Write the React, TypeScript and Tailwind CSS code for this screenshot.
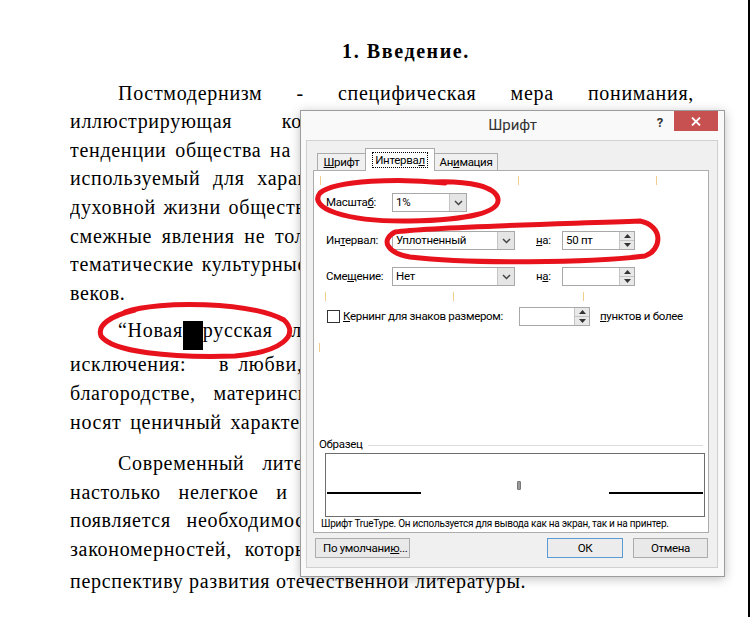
import React from 'react';

type DocLine = { text: React.ReactNode; cls?: string };

const U = ({ children }: { children: React.ReactNode }) => <span className="underline">{children}</span>;

const p1: DocLine[] = [
  { text: 'Постмодернизм - специфическая мера понимания,', cls: 'pl-[48px] text-justify [text-align-last:justify]' },
  { text: 'иллюстрирующая конкретные исторические реалии', cls: '[word-spacing:44px]' },
  { text: 'тенденции общества на современном этапе, термин,', cls: '[word-spacing:3px]' },
  { text: 'используемый для характеристики различных сфер', cls: '[word-spacing:7px]' },
  { text: 'духовной жизни общества, а также обозначающий', cls: '[word-spacing:2px]' },
  { text: 'смежные явления не только в литературе, но и все', cls: '[word-spacing:4px]' },
  { text: 'тематические культурные тенденции конца XX – начала XXI', cls: '[word-spacing:2px]' },
  { text: 'веков.' },
];

const p2: DocLine[] = [
  {
    text: (
      <>
        <span className="inline-block w-[149px]">исключения:</span>в
        <span className="inline-block w-[9px]" />
        любви, дружбе, героизме, честности,
      </>
    ),
    cls: '[word-spacing:13px]',
  },
  { text: 'благородстве, материнском чувстве все произведения', cls: '[word-spacing:12px]' },
  { text: 'носят ценичный характер и насмешливый тон.', cls: '[word-spacing:3px]' },
];

const p3: DocLine[] = [
  { text: 'Современный литературный процесс представляет собой', cls: 'pl-[48px] [word-spacing:12px]' },
  { text: 'настолько нелегкое и неоднозначное явление, что', cls: '[word-spacing:12px]' },
  { text: 'появляется необходимость в определении основных', cls: '[word-spacing:10px]' },
  { text: 'закономерностей, которые позволят представить', cls: '[word-spacing:7px]' },
  { text: 'перспективу развития отечественной литературы.', cls: 'mt-[3px]' },
];

const Line = ({ line }: { line: DocLine }) => (
  <div className={`leading-[28.6px] whitespace-nowrap overflow-hidden ${line.cls ?? ''}`}>{line.text}</div>
);

const Chevron = () => (
  <svg width="9" height="6" viewBox="0 0 9 6">
    <path d="M1 1l3.5 3.5L8 1" fill="none" stroke="#444" strokeWidth="1.5" />
  </svg>
);

const Select = ({ value, w }: { value: string; w: string }) => (
  <div className={`${w} h-[19px] flex border border-[#a8a8a8] bg-white`}>
    <span className="flex-1 pl-[3px] leading-[17px]">{value}</span>
    <span className="w-[17px] flex items-center justify-center bg-[#e5e5e5] border-l border-[#c4c4c4]">
      <Chevron />
    </span>
  </div>
);

const Spin = ({ value, w }: { value: string; w: string }) => (
  <div className={`${w} h-[19px] flex border border-[#a8a8a8] bg-white`}>
    <span className="flex-1 pl-[3px] leading-[17px]">{value}</span>
    <span className="w-[15px] flex flex-col bg-[#e8e8e8] border-l border-[#c4c4c4]">
      <span className="flex-1 flex items-center justify-center border-b border-[#c4c4c4]">
        <svg width="7" height="4" viewBox="0 0 7 4"><path d="M0 4h7L3.5 0z" fill="#333" /></svg>
      </span>
      <span className="flex-1 flex items-center justify-center">
        <svg width="7" height="4" viewBox="0 0 7 4"><path d="M0 0h7L3.5 4z" fill="#333" /></svg>
      </span>
    </span>
  </div>
);

const Tick = ({ cls }: { cls: string }) => <span className={`absolute w-px h-[9px] bg-[#f0cf8c] ${cls}`} />;

const FontDialog = () => (
  <div className="absolute left-[300px] top-[110px] w-[425px] h-[467px] border border-[#9c9c9c] bg-[#f9f9f9] shadow-[0_2px_10px_rgba(0,0,0,0.25)] flex flex-col font-['Roboto','Noto_Sans',sans-serif] text-[11.5px] tracking-[-0.3px] text-black whitespace-nowrap">
    {/* title bar */}
    <div className="h-[29px] shrink-0 flex">
      <div className="w-[69px]" />
      <div className="flex-1 text-center text-[15px] tracking-normal text-[#333] leading-[29px]">Шрифт</div>
      <div className="w-[69px] flex items-start justify-end pr-[6px]">
        <span className="mt-[4px] mr-[11px] text-[13px] font-bold text-[#333] leading-[16px]">?</span>
        <button className="w-[44px] h-[20px] bg-[#c75050] flex items-center justify-center">
          <svg width="10" height="9" viewBox="0 0 10 9">
            <path d="M1 0.5l8 8M9 0.5l-8 8" stroke="#fff" strokeWidth="1.8" />
          </svg>
        </button>
      </div>
    </div>

    {/* client area */}
    <div className="ml-[5px] mr-[6px] mb-[8px] flex-1 bg-[#f0f0f0] border border-[#d0d0d0] flex flex-col">
      <div className="flex items-end h-[22px] pl-[10px] mt-[7px]">
        <div className="w-[49px] h-[17px] border border-b-0 border-[#acacac] bg-[#f0f0f0] text-center leading-[16px]">
          <U>Ш</U>рифт
        </div>
        <div className="relative z-10 w-[70px] h-[23px] -ml-px -mb-px border border-b-0 border-[#acacac] bg-white flex justify-center pt-[3px]">
          <span className="h-[16px] px-[2px] border border-dotted border-black leading-[14px]">
            Интерва<U>л</U>
          </span>
        </div>
        <div className="w-[64px] h-[17px] -ml-px border border-b-0 border-[#acacac] bg-[#f0f0f0] text-center leading-[16px]">
          Ан<U>и</U>мация
        </div>
      </div>

      {/* tab page */}
      <div className="relative ml-[6px] w-[396px] h-[363px] bg-white border border-[#acacac]">
        <Tick cls="left-[6px] top-[5px]" />
        <Tick cls="left-[204px] top-[5px]" />
        <Tick cls="left-[342px] top-[5px]" />
        <Tick cls="left-[11px] top-[121px]" />
        <Tick cls="left-[139px] top-[121px]" />
        <Tick cls="left-[269px] top-[121px]" />
        <Tick cls="left-[5px] top-[172px]" />

        <div className="mt-[22px] pl-[12px] flex items-center h-[19px]">
          <span className="w-[66px]">Масшта<U>б</U>:</span>
          <Select value="1%" w="w-[75px]" />
        </div>
        <div className="mt-[19px] pl-[12px] flex items-center h-[19px]">
          <span className="w-[66px]">Ин<U>т</U>ервал:</span>
          <Select value="Уплотненный" w="w-[123px]" />
          <span className="ml-[21px] w-[26px]"><U>н</U>а:</span>
          <Spin value="50 пт" w="w-[73px]" />
        </div>
        <div className="mt-[17px] pl-[12px] flex items-center h-[19px]">
          <span className="w-[66px]">Сме<U>щ</U>ение:</span>
          <Select value="Нет" w="w-[123px]" />
          <span className="ml-[21px] w-[26px]">н<U>а</U>:</span>
          <Spin value="" w="w-[73px]" />
        </div>
        <div className="mt-[21px] pl-[13px] flex items-center h-[19px]">
          <span className="w-[13px] h-[13px] border border-[#333] bg-white" />
          <span className="ml-[3px] w-[176px]"><U>К</U>ернинг для знаков размером:</span>
          <Spin value="" w="w-[71px]" />
          <span className="ml-[10px]"><U>п</U>унктов и более</span>
        </div>

        <div className="mt-[111px] px-[5px] h-[16px] flex items-center gap-[5px]">
          <span>Образец</span>
          <span className="flex-1 h-px bg-[#dcdcdc]" />
        </div>
        <div className="ml-[11px] w-[380px] h-[64px] border border-[#6e6e6e] flex items-start pt-[38px] px-px">
          <span className="w-[94px] h-[1.5px] bg-black" />
          <span className="flex-1 flex justify-center">
            <span className="ml-[8px] -mt-[11px] w-[4px] h-[9px] bg-[#9a9a9a] border border-[#777] rounded-[1px]" />
          </span>
          <span className="w-[94px] h-[1.5px] bg-black" />
        </div>
        <div className="pl-[7px] text-[10px] tracking-[-0.25px] leading-[13px]">
          Шрифт TrueType. Он используется для вывода как на экран, так и на принтер.
        </div>
      </div>

      {/* buttons */}
      <div className="mt-[5px] flex h-[20px]">
        <button className="ml-[8px] w-[95px] h-[20px] border border-[#acacac] bg-[#e9e9e9] text-left pl-[7px] leading-[18px]">
          По умолчани<U>ю</U>...
        </button>
        <button className="ml-[137px] w-[76px] h-[20px] border border-[#5b9bd5] bg-[#ececec] leading-[18px]">ОК</button>
        <button className="ml-[10px] w-[75px] h-[20px] border border-[#acacac] bg-[#e9e9e9] leading-[18px]">Отмена</button>
      </div>
    </div>
  </div>
);

const Annotations = () => (
  <svg className="absolute inset-0 pointer-events-none" width="753" height="617" viewBox="0 0 753 617">
    <g fill="none" stroke="#e8121c" strokeWidth="5" strokeLinecap="round" strokeLinejoin="round">
      <path d="M445 183 C400 178 335 180 320 193 C308 208 345 222 410 221 C470 220 500 212 498 199 C496 187 470 180 430 182" />
      <path d="M395 232 C430 227 560 224 640 221 C664 226 662 250 645 256 C590 263 470 264 410 257 C387 253 380 240 395 232" />
      <path d="M125 312 C160 300 250 302 284 320 C300 335 282 352 235 356 C170 358 112 352 101 336 C97 325 110 316 135 310" />
    </g>
  </svg>
);

export default function App() {
  return (
    <div className="relative w-[753px] h-[617px] overflow-hidden bg-white flex">
      <div className="w-[748px] shrink-0 pt-[37px] pl-[70px] font-['Liberation_Serif','Times_New_Roman',serif] text-[20px] tracking-[0.7px] text-black">
        <div className="w-[624px]">
          <div className="pl-[48px] text-center font-bold tracking-[1.6px] leading-[28.6px] mb-[13px]">1. Введение.</div>
          {p1.map((l, i) => <Line key={i} line={l} />)}
          <div className="mt-[9px]">
            <div className="pl-[48px] leading-[28.6px] whitespace-nowrap overflow-hidden [word-spacing:13px]">
              “Новая<span className="inline-block w-[20px] h-[29px] bg-black align-[-13px]" />русская литература” отличается тем, что без
            </div>
            {p2.map((l, i) => <Line key={i} line={l} />)}
          </div>
          <div className="mt-[13px]">
            {p3.map((l, i) => <Line key={i} line={l} />)}
          </div>
        </div>
      </div>
      <div className="w-[2px] shrink-0 bg-black" />
      <FontDialog />
      <Annotations />
    </div>
  );
}
